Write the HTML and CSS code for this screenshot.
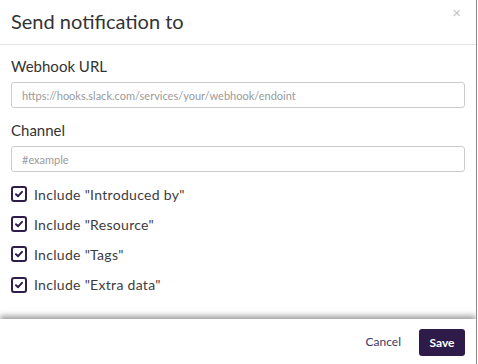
FILE: index.html
```html
<!DOCTYPE html>
<html lang="en">
<head>
    <meta charset="UTF-8">
    <meta name="viewport" content="width=device-width, initial-scale=1.0">
    <title>Send notification to</title>
    <link rel="stylesheet" href="styles.css">
</head>
<body>
    <div class="modal">
        <div class="modal-header">
            <h2>Send notification to</h2>
            <button class="close" aria-label="Close">&times;</button>
        </div>

        <div class="modal-body">
            <div class="form-group">
                <label for="webhook">Webhook URL</label>
                <input type="text" id="webhook" placeholder="https://hooks.slack.com/services/your/webhook/endoint">
            </div>

            <div class="form-group">
                <label for="channel">Channel</label>
                <input type="text" id="channel" placeholder="#example">
            </div>

            <div class="checks">
                <label class="check"><span class="box"><svg viewBox="0 0 10 10"><path d="M2 5.2 L4.1 7.2 L8 2.8"/></svg></span>Include "Introduced by"</label>
                <label class="check"><span class="box"><svg viewBox="0 0 10 10"><path d="M2 5.2 L4.1 7.2 L8 2.8"/></svg></span>Include "Resource"</label>
                <label class="check"><span class="box"><svg viewBox="0 0 10 10"><path d="M2 5.2 L4.1 7.2 L8 2.8"/></svg></span>Include "Tags"</label>
                <label class="check"><span class="box"><svg viewBox="0 0 10 10"><path d="M2 5.2 L4.1 7.2 L8 2.8"/></svg></span>Include "Extra data"</label>
            </div>
        </div>

        <div class="modal-footer">
            <button class="btn-link">Cancel</button>
            <button class="btn-primary">Save</button>
        </div>
    </div>
</body>
</html>
```

FILE: styles.css
```css
body {
    margin: 0;
    background-color: #fff;
    font-family: Lato, "Open Sans", Arial, sans-serif;
}
.modal {
    width: 476px;
    height: 364px;
    border-right: 1px solid #8a8a8a;
    display: flex;
    flex-direction: column;
    background-color: white;
    overflow: hidden;
}
.modal-header {
    height: 44px;
    border-bottom: 1px solid #e3e3e3;
    display: flex;
    align-items: center;
    justify-content: space-between;
    padding: 0 11px;
    flex-shrink: 0;
}
.modal-header h2 {
    margin: 0 0 2px 0;
    font-size: 20px;
    font-weight: 400;
    color: #333;
}
.close {
    border: none;
    background: none;
    color: #c4c4c4;
    font-size: 15px;
    line-height: 1;
    padding: 0;
    margin: 0 4px 20px 0;
    cursor: pointer;
}
.modal-body {
    flex: 1;
    padding: 11px 11px 0 11px;
}
.form-group {
    margin-bottom: 12px;
}
.form-group label {
    display: block;
    font-size: 15px;
    line-height: 20px;
    color: #333;
    margin-bottom: 6px;
}
input[type="text"] {
    width: 100%;
    height: 26px;
    box-sizing: border-box;
    border: 1px solid #ccc;
    border-radius: 3px;
    padding: 0 10px;
    font-family: inherit;
    font-size: 11px;
    color: #333;
}
input::placeholder {
    color: #9a9a9a;
}
.checks {
    margin-top: -5px;
}
.check {
    display: flex;
    align-items: center;
    height: 30.2px;
    font-size: 14px;
    color: #3d3d3d;
    letter-spacing: 0.3px;
}
.box {
    width: 12px;
    height: 12px;
    border: 2px solid #2f1d4d;
    border-radius: 3px;
    margin-right: 7px;
    display: flex;
    align-items: center;
    justify-content: center;
}
.box svg {
    width: 10px;
    height: 10px;
    fill: none;
    stroke: #2f1d4d;
    stroke-width: 2;
    stroke-linecap: round;
    stroke-linejoin: round;
}
.modal-footer {
    height: 45px;
    flex-shrink: 0;
    display: flex;
    align-items: center;
    justify-content: flex-end;
    padding: 0 11px;
    gap: 12px;
    box-shadow: 0 -3px 6px rgba(0,0,0,0.4);
    position: relative;
}
.btn-link {
    border: none;
    background: none;
    font-family: inherit;
    font-size: 12px;
    color: #3f3763;
    cursor: pointer;
}
.btn-primary {
    background-color: #2e1b4a;
    color: white;
    border: none;
    border-radius: 3px;
    font-family: inherit;
    font-size: 12px;
    font-weight: bold;
    width: 46px;
    height: 27px;
    cursor: pointer;
    margin-top: 2px;
}
```
